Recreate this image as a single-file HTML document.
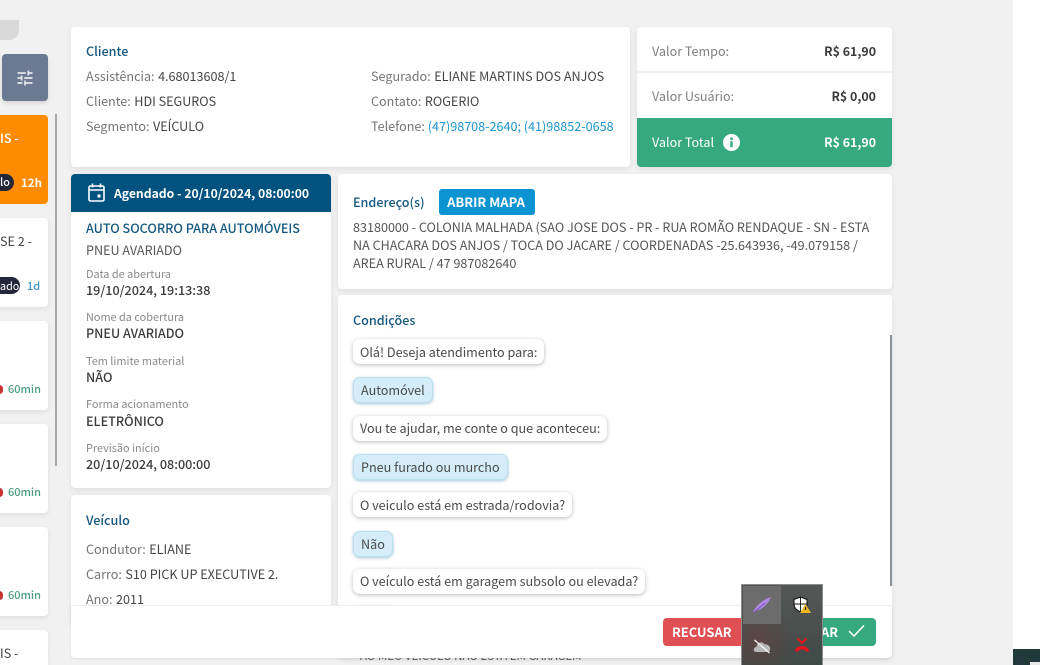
<!DOCTYPE html>
<html lang="pt"><head><meta charset="utf-8"><title>Atendimento</title>
<style>
html,body{margin:0;padding:0;width:1040px;height:665px;overflow:hidden;background:#f1f1f1}
body{position:relative;font-family:"Noto Sans CJK JP","Liberation Sans",sans-serif;font-size:12.6px;color:#444}
.a{position:absolute;white-space:nowrap;line-height:20px}
.c{position:absolute;background:#fff;border-radius:4px;box-shadow:0 2px 6px rgba(0,0,0,.08);overflow:hidden}
.g{color:#757575}
.g span{color:#444;margin-left:.7px}
.h{color:#14577f;font-weight:500}
.l{font-size:10.9px;color:#8a8a8a}
.b{font-weight:500;color:#3b3b3b}
.r{font-weight:700;font-size:12.4px;color:#3b3b3b}
.s{font-size:11px;font-weight:500}
.bub{position:absolute;left:353px;height:25px;line-height:25px;padding:0 7px;background:#fff;border-radius:7px;box-shadow:0 1px 4px rgba(0,0,0,.28);white-space:nowrap;color:#4a4a4a}
.blue{background:#d4edf8;box-shadow:0 0 0 1px #bcdfee inset,0 1px 3px rgba(20,110,150,.4);padding:0 8px;height:26px;line-height:26px}
</style></head><body>

<div style="position:absolute;left:0;top:0;width:19px;height:40px;background:#d9d9d9;border-radius:0 0 10px 0;clip-path:inset(20px 0 0 0)"></div>
<div style="position:absolute;left:2px;top:54px;width:46px;height:47px;background:#6b7a90;border-radius:4px;box-shadow:0 2px 4px rgba(0,0,0,.12)"></div>
<svg style="position:absolute;left:15px;top:68px" width="20" height="20" viewBox="0 0 24 24" fill="#e3e6ea"><path d="M3 17v2h6v-2H3zM3 5v2h10V5H3zm10 16v-2h8v-2h-8v-2h-2v6h2zM7 9v2H3v2h4v2h2V9H7zm14 4v-2H11v2h10zm-6-4h2V7h4V5h-4V3h-2v6z"/></svg>
<div style="position:absolute;left:55px;top:114px;width:2px;height:352px;background:#a8a8a8"></div>

<div style="position:absolute;left:-10px;top:115px;width:58px;height:89px;background:#ff8c00;border-radius:4px"></div>
<div class="a" style="left:0;top:128px;color:#fff;font-weight:500">IS -</div>
<div style="position:absolute;left:-20px;top:174px;width:34px;height:17px;background:#24263a;border-radius:9px"></div>
<div class="a" style="left:0;top:172px;color:#fff;font-size:10.8px;font-weight:500">lo</div>
<div class="a" style="left:21px;top:173px;color:#fff;font-weight:700;font-size:11.5px">12h</div>

<div class="c" style="left:-10px;top:218px;width:58px;height:89px"></div>
<div class="a" style="left:0;top:231px">SE 2 -</div>
<div style="position:absolute;left:-20px;top:277px;width:40px;height:17px;background:#24263a;border-radius:9px"></div>
<div class="a" style="left:0;top:276px;color:#fff;font-size:10.8px">ado</div>
<div class="a s" style="left:27px;top:276px;color:#3d97c9">1d</div>

<div class="c" style="left:-10px;top:321px;width:58px;height:89px"></div>
<div style="position:absolute;left:-4px;top:385px;width:7px;height:9px;background:#c43434;border-radius:4px"></div>
<div class="a s" style="left:8px;top:379px;color:#4c9f7f">60min</div>
<div class="c" style="left:-10px;top:424px;width:58px;height:89px"></div>
<div style="position:absolute;left:-4px;top:488px;width:7px;height:9px;background:#c43434;border-radius:4px"></div>
<div class="a s" style="left:8px;top:482px;color:#4c9f7f">60min</div>
<div class="c" style="left:-10px;top:527px;width:58px;height:89px"></div>
<div style="position:absolute;left:-4px;top:591px;width:7px;height:9px;background:#c43434;border-radius:4px"></div>
<div class="a s" style="left:8px;top:585px;color:#4c9f7f">60min</div>
<div class="c" style="left:-10px;top:630px;width:58px;height:35px;border-radius:4px 4px 0 0"></div>
<div class="a" style="left:0;top:643px">IS -</div>

<div class="c" style="left:71px;top:27px;width:559px;height:140px"></div>
<div class="a h" style="left:86px;top:41px">Cliente</div>
<div class="a g" style="left:86px;top:66px">Assistência: <span>4.68013608/1</span></div>
<div class="a g" style="left:86px;top:91px">Cliente: <span>HDI SEGUROS</span></div>
<div class="a g" style="left:86px;top:116px">Segmento: <span>VEÍCULO</span></div>
<div class="a g" style="left:371px;top:66px">Segurado: <span>ELIANE MARTINS DOS ANJOS</span></div>
<div class="a g" style="left:371px;top:91px">Contato: <span>ROGERIO</span></div>
<div class="a g" style="left:371px;top:116px">Telefone: <span style="color:#1c95cf;margin:0">(47)98708-2640; (41)98852-0658</span></div>

<div class="c" style="left:637px;top:27px;width:255px;height:140px"></div>
<div style="position:absolute;left:637px;top:71px;width:255px;height:2px;background:#f0f0f0"></div>
<div class="a g" style="left:652px;top:41px;color:#808080">Valor Tempo:</div>
<div class="a r" style="right:164px;top:41px">R$ 61,90</div>
<div class="a g" style="left:652px;top:86px;color:#808080">Valor Usuário:</div>
<div class="a r" style="right:164px;top:86px">R$ 0,00</div>
<div style="position:absolute;left:637px;top:118px;width:255px;height:49px;background:#36a980;border-radius:0 0 4px 4px"></div>
<div class="a" style="left:652px;top:132px;color:#fff">Valor Total</div>
<svg style="position:absolute;left:723px;top:134px" width="17" height="17" viewBox="0 0 17 17"><circle cx="8.5" cy="8.5" r="8.5" fill="#fff"/><rect x="7.3" y="7.2" width="2.4" height="6" fill="#36a980"/><circle cx="8.5" cy="4.8" r="1.4" fill="#36a980"/></svg>
<div class="a r" style="right:164px;top:132px;color:#fff">R$ 61,90</div>

<div class="c" style="left:71px;top:174px;width:260px;height:314px"></div>
<div style="position:absolute;left:71px;top:174px;width:260px;height:38px;background:#01527f;border-radius:4px 4px 0 0"></div>
<svg style="position:absolute;left:88px;top:183px" width="17" height="19" viewBox="0 0 17 19" fill="none" stroke="#fff" stroke-width="1.6"><rect x="1" y="3" width="15" height="15" rx="1.5"/><path d="M1 7h15M4.5 0.5v4M12.500 0.500v4"/><rect x="9.500" y="11.500" width="3" height="3" fill="#fff" stroke="none"/></svg>
<div class="a" style="left:114px;top:183px;color:#fff;font-weight:700;font-size:12.2px">Agendado - 20/10/2024, 08:00:00</div>
<div class="a h" style="left:86px;top:218px">AUTO SOCORRO PARA AUTOMÓVEIS</div>
<div class="a" style="left:86px;top:240px;color:#555">PNEU AVARIADO</div>
<div class="a l" style="left:86px;top:264px">Data de abertura</div>
<div class="a b" style="left:86px;top:280px">19/10/2024, 19:13:38</div>
<div class="a l" style="left:86px;top:307px">Nome da cobertura</div>
<div class="a b" style="left:86px;top:323px">PNEU AVARIADO</div>
<div class="a l" style="left:86px;top:351px">Tem limite material</div>
<div class="a b" style="left:86px;top:367px">NÃO</div>
<div class="a l" style="left:86px;top:394px">Forma acionamento</div>
<div class="a b" style="left:86px;top:411px">ELETRÔNICO</div>
<div class="a l" style="left:86px;top:438px">Previsão início</div>
<div class="a b" style="left:86px;top:454px">20/10/2024, 08:00:00</div>

<div class="c" style="left:71px;top:495px;width:260px;height:130px"></div>
<div class="a h" style="left:86px;top:510px">Veículo</div>
<div class="a g" style="left:86px;top:539px">Condutor: <span>ELIANE</span></div>
<div class="a g" style="left:86px;top:564px">Carro: <span>S10 PICK UP EXECUTIVE 2.</span></div>
<div class="a g" style="left:86px;top:589px">Ano: <span>2011</span></div>

<div class="c" style="left:338px;top:174px;width:554px;height:115px"></div>
<div class="a h" style="left:353px;top:192px">Endereço(s)</div>
<div style="position:absolute;left:439px;top:189px;width:96px;height:26px;line-height:26px;box-sizing:border-box;padding-right:2px;text-align:center;background:#0b93d2;color:#fff;border-radius:3px;font-weight:700;font-size:13px">ABRIR MAPA</div>
<div class="a" style="left:353px;top:218px;line-height:18px;color:#555">83180000 - COLONIA MALHADA (SAO JOSE DOS - PR - RUA ROMÃO RENDAQUE - SN - ESTA<br>NA CHACARA DOS ANJOS / TOCA DO JACARE / COORDENADAS -25.643936, -49.079158 /<br>AREA RURAL / 47 987082640</div>

<div class="c" style="left:338px;top:295px;width:554px;height:363px"></div>
<div class="a h" style="left:353px;top:310px">Condições</div>
<div class="bub" style="top:339px">Olá! Deseja atendimento para:</div>
<div class="bub blue" style="top:377px">Automóvel</div>
<div class="bub" style="top:416px;line-height:24px">Vou te ajudar, me conte o que aconteceu:</div>
<div class="bub blue" style="top:454px">Pneu furado ou murcho</div>
<div class="bub" style="top:492px">O veiculo está em estrada/rodovia?</div>
<div class="bub blue" style="top:531px">Não</div>
<div class="bub" style="top:569px;line-height:24px">O veículo está em garagem subsolo ou elevada?</div>
<div class="bub blue" style="top:606px;width:24px"></div>
<div style="position:absolute;left:890px;top:335px;width:2px;height:251px;background:#8a9097"></div>

<div style="position:absolute;left:71px;top:605px;width:821px;height:53px;background:#fff;border-top:1px solid #eee;box-sizing:border-box;border-radius:0 0 4px 4px;box-shadow:0 1px 2px rgba(0,0,0,.08)"></div>
<div class="a" style="left:360px;top:649px;font-size:11.5px;line-height:14px;color:#555;clip-path:inset(9px 0 0 0)">AO MEU VEÍCULO NÃO ESTÁ EM GARAGEM</div>
<div style="position:absolute;left:663px;top:618px;width:84px;height:28px;line-height:28px;text-indent:9px;background:#e04f54;color:#fff;border-radius:4px 0 0 4px;font-weight:700;font-size:12.9px">RECUSAR</div>
<div style="position:absolute;left:760px;top:618px;width:116px;height:28px;line-height:28px;box-sizing:border-box;padding-right:38px;text-align:right;background:#36a980;color:#fff;border-radius:0 4px 4px 0;font-weight:700;font-size:12.9px">ACEITAR</div>
<svg style="position:absolute;left:848px;top:624px" width="17" height="14" viewBox="0 0 17 14" fill="none" stroke="#fff" stroke-width="1.5"><path d="M1 7l5 5L16 1.500"/></svg>

<div style="position:absolute;left:741px;top:584px;width:82px;height:81px;background:radial-gradient(circle at 20% 70%,rgba(110,60,60,.55),transparent 45%),linear-gradient(180deg,#555757,#3f4a47);border:1px solid #8d8d8d;border-bottom:0;box-sizing:border-box"></div>
<div style="position:absolute;left:743px;top:586px;width:38px;height:38px;background:#6c6c6c"></div>
<svg style="position:absolute;left:752px;top:595px" width="20" height="20" viewBox="0 0 20 20"><path d="M1 17C4 11 10 5 19 2C16 9 10 15 3 16Z" fill="#b08ae6"/><path d="M1 18L13 8" stroke="#7a55b8" stroke-width="1"/></svg>
<svg style="position:absolute;left:793px;top:596px" width="18" height="18" viewBox="0 0 18 18"><path d="M7.500 1L14 3.500V8C14 12 11 14.500 7.500 16C4 14.500 1 12 1 8V3.500Z" fill="#fff" stroke="#111" stroke-width="1"/><path d="M7.500 1V16M1 8H14" stroke="#111" stroke-width=".9"/><path d="M12.500 8L18 17H7Z" fill="#f2b821"/><path d="M12.500 11v3" stroke="#222" stroke-width="1.200"/></svg>
<svg style="position:absolute;left:753px;top:638px" width="18" height="16" viewBox="0 0 18 16"><path d="M3 14C0 14 0 9 3.500 9C4 4 10 3 11.500 6.500C15 5.500 18 9 17 12C16.500 14 15 14 14 14Z" fill="#b8b8b8"/><path d="M1.500 2L16.500 15" stroke="#f4f4f4" stroke-width="1.300"/></svg>
<svg style="position:absolute;left:794px;top:637px" width="16" height="17" viewBox="0 0 16 17" fill="none" stroke="#e2141c"><path d="M3.500 1.500L8 6L12.500 1.500" stroke-width="2.200"/><path d="M2.500 14.500C3 9.500 13 9.500 13.500 14.500" stroke-width="3.400"/></svg>

<div style="position:absolute;left:1013px;top:0;width:27px;height:665px;background:#fff"></div>
<div style="position:absolute;left:1013px;top:649px;width:27px;height:16px;background:#22393b"></div>
<div style="position:absolute;left:1030px;top:662px;width:10px;height:3px;background:#e8e8e8"></div>
</body></html>
